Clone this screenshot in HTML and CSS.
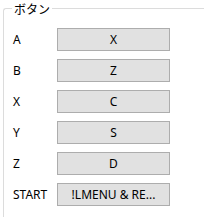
FILE: index.html
```html
<!DOCTYPE html>
<html lang="ja">
<head>
   <meta charset="UTF-8">
   <meta name="viewport" content="width=device-width, initial-scale=1.0">
   <title>ボタン</title>
   <link rel="stylesheet" href="styles.css">
</head>
<body>
    <fieldset class="group">
        <legend class="group_title">ボタン</legend>
        <div class="rows">
            <div class="row">
                <div class="label">A</div>
                <button class="btn">X</button>
            </div>
            <div class="row">
                <div class="label">B</div>
                <button class="btn">Z</button>
            </div>
            <div class="row">
                <div class="label">X</div>
                <button class="btn">C</button>
            </div>
            <div class="row">
                <div class="label">Y</div>
                <button class="btn">S</button>
            </div>
            <div class="row">
                <div class="label">Z</div>
                <button class="btn">D</button>
            </div>
            <div class="row">
                <div class="label">START</div>
                <button class="btn">!LMENU &amp; RE...</button>
            </div>
        </div>
    </fieldset>
</body>
</html>
```

FILE: styles.css
```css
body {
    margin: 0;
    background: #fff;
    overflow: hidden;
    font-family: "Noto Sans", "Noto Sans CJK JP", sans-serif;
    font-size: 12px;
    color: #000;
}
.group {
    margin: 0 0 0 3px;
    padding: 0;
    width: 201px;
    height: 217px;
    border: 1px solid #dcdcdc;
    border-right: none;
    border-bottom: none;
    border-radius: 3px 0 0 0;
    box-sizing: border-box;
}
.group_title {
    margin-left: 8px;
    padding: 0 2px;
    font-family: "Noto Sans CJK JP", sans-serif;
    font-size: 12px;
    line-height: 17px;
}
.rows {
    display: flex;
    flex-direction: column;
    gap: 8px;
    padding: 11px 0 0 9px;
}
.row {
    display: flex;
    align-items: center;
    height: 23px;
}
.label {
    width: 44px;
}
.btn {
    width: 113px;
    height: 23px;
    margin: 0;
    padding: 0;
    border: 1px solid #adadad;
    border-radius: 0;
    background: #e1e1e1;
    font-family: "Noto Sans", sans-serif;
    font-size: 12px;
    color: #000;
}
```
